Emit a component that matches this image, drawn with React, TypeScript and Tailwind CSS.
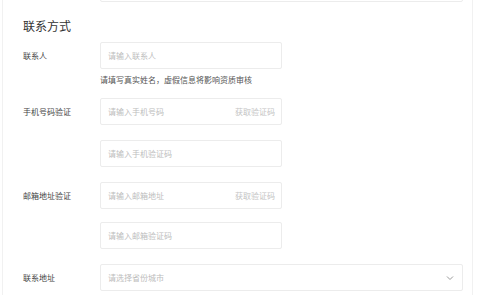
import React from "react";

const font = { fontFamily: '"Noto Sans CJK SC", "Noto Sans", sans-serif' };

function Field({ placeholder, action, wide }: { placeholder: string; action?: string; wide?: boolean }) {
    return (
        <div
            className={`h-[27px] flex items-center justify-between border border-[#ececec] rounded-[2px] bg-white pl-[7px] pr-[6px] ${wide ? "w-[363px]" : "w-[182px]"}`}
        >
            <span className="text-[8px] leading-[12px] text-[#bdbdbd]">{placeholder}</span>
            {action && <span className="text-[8px] leading-[12px] text-[#c4c4c4]">{action}</span>}
            {wide && (
                <svg width="8" height="6" viewBox="0 0 8 6" className="mr-[2px]">
                    <path d="M1 1.5 L4 4.5 L7 1.5" fill="none" stroke="#9a9a9a" strokeWidth="1" />
                </svg>
            )}
        </div>
    );
}

function Row({ label, children, className = "" }: { label?: string; children: React.ReactNode; className?: string }) {
    return (
        <div className={`flex items-center ${className}`}>
            <div className="w-[77px] text-[8px] leading-[12px] text-[#444]">{label}</div>
            {children}
        </div>
    );
}

export default function App() {
    return (
        <div className="w-[480px] h-[300px] overflow-hidden bg-white" style={font}>
            <div className="ml-[2px] w-[471px] h-[320px] border-x border-[#f1f1f1] pl-[20px]">
                {/* previous section's last field, cut off at the top */}
                <div className="-mt-[25px] ml-[77px]">
                    <Field placeholder="" wide />
                </div>

                <h2 className="mt-[18px] text-[12px] leading-[12px] text-[#333]">联系方式</h2>

                <Row label="联系人" className="mt-[10px]">
                    <Field placeholder="请输入联系人" />
                </Row>
                <p className="mt-[5px] ml-[77px] text-[8px] leading-[12px] text-[#555]">
                    请填写真实姓名，虚假信息将影响资质审核
                </p>

                <Row label="手机号码验证" className="mt-[12px]">
                    <Field placeholder="请输入手机号码" action="获取验证码" />
                </Row>
                <Row className="mt-[15px]">
                    <Field placeholder="请输入手机验证码" />
                </Row>

                <Row label="邮箱地址验证" className="mt-[15px]">
                    <Field placeholder="请输入邮箱地址" action="获取验证码" />
                </Row>
                <Row className="mt-[13px]">
                    <Field placeholder="请输入邮箱验证码" />
                </Row>

                <Row label="联系地址" className="mt-[15px]">
                    <Field placeholder="请选择省份城市" wide />
                </Row>
            </div>
        </div>
    );
}
